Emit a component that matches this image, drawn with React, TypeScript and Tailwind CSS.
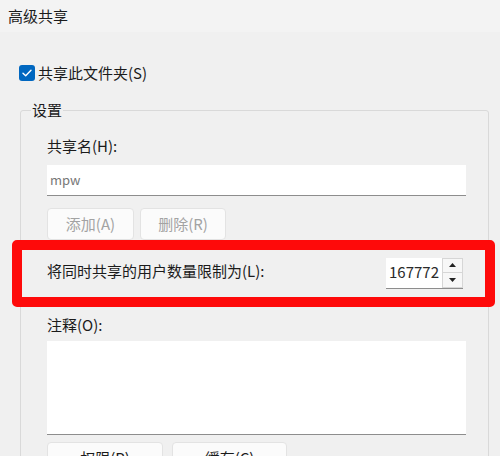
import React from 'react';

function Button({ label, width, disabled }: { label: string; width: string; disabled?: boolean }) {
  return (
    <button
      className={`${width} h-[32px] rounded-[4px] border border-[#e3e3e3] bg-[#fbfbfb] text-[15px] leading-[20px] ${
        disabled ? 'text-[#a3a3a3]' : 'text-[#1b1b1b]'
      }`}
    >
      {label}
    </button>
  );
}

function SpinBox({ value }: { value: string }) {
  return (
    <div className="mr-[3px] flex h-[31px] w-[77px] items-stretch bg-white border-b border-[#8d8d8d]">
      <div className="flex flex-1 items-center pl-[3px] text-[15px] text-[#2a2a2a]">{value}</div>
      <div className="flex w-[21px] flex-col border border-[#d6d6d6] bg-[#f7f7f7]">
        <div className="flex flex-1 items-center justify-center border-b border-[#d6d6d6]">
          <svg width="7" height="4" viewBox="0 0 7 4">
            <path d="M0 4 L3.5 0 L7 4 Z" fill="#222" />
          </svg>
        </div>
        <div className="flex flex-1 items-center justify-center">
          <svg width="7" height="4" viewBox="0 0 7 4">
            <path d="M0 0 L7 0 L3.5 4 Z" fill="#222" />
          </svg>
        </div>
      </div>
    </div>
  );
}

export default function App() {
  return (
    <div className="h-[456px] w-[500px] overflow-hidden bg-[#f0f0f0] font-['Noto_Sans_CJK_SC','Microsoft_YaHei',sans-serif] text-[#1b1b1b]">
      {/* Title bar */}
      <div className="flex h-[32px] items-center bg-[#f3f3f3] pl-[8px] text-[15px] leading-[20px]">高级共享</div>

      {/* Share checkbox */}
      <div className="ml-[19px] mt-[33px] flex h-[16px] items-center gap-[3px]">
        <div className="flex h-[16px] w-[16px] items-center justify-center rounded-[3px] bg-[#0067c0]">
          <svg width="10" height="8" viewBox="0 0 10 8" fill="none">
            <path d="M1 4.2 L3.7 6.8 L9 1.2" stroke="white" strokeWidth="1.4" strokeLinecap="round" strokeLinejoin="round" />
          </svg>
        </div>
        <span className="text-[15px] leading-[20px]">共享此文件夹(S)</span>
      </div>

      {/* Settings group */}
      <fieldset className="ml-[20px] mt-[21px] w-[469px] rounded-[3px] border border-[#d9d9d9] pb-[20px] pl-[26px] pr-[22px] pt-[18px]">
        <legend className="-ml-[16px] px-[1px] text-[15px] leading-[16px]">设置</legend>

        <div className="text-[15px] leading-[20px]">共享名(H):</div>
        <div className="mt-[9px] flex h-[31px] items-center border-b border-[#8d8d8d] bg-white pl-[3px] text-[13px] text-[#777]">
          mpw
        </div>

        <div className="mt-[12px] flex gap-[6px]">
          <Button label="添加(A)" width="w-[87px]" disabled />
          <Button label="删除(R)" width="w-[86px]" disabled />
        </div>

        {/* User limit row, highlighted */}
        <div className="relative mt-[9px] flex h-[48px] items-center justify-between">
          <div className="pointer-events-none absolute -bottom-[10px] -left-[35px] -right-[29px] -top-[9px] rounded-[5px] border-[10px] border-[#fe0a0a]" />
          <span className="-mt-[5px] text-[15px] leading-[20px]">将同时共享的用户数量限制为(L):</span>
          <SpinBox value="167772" />
        </div>

        <div className="mt-[18px] text-[15px] leading-[20px]">注释(O):</div>
        <div className="mt-[6px] h-[94px] border-b border-[#8d8d8d] bg-white" />

        <div className="mt-[7px] flex gap-[9px]">
          <Button label="权限(P)" width="w-[116px]" />
          <Button label="缓存(C)" width="w-[115px]" />
        </div>
      </fieldset>
    </div>
  );
}
